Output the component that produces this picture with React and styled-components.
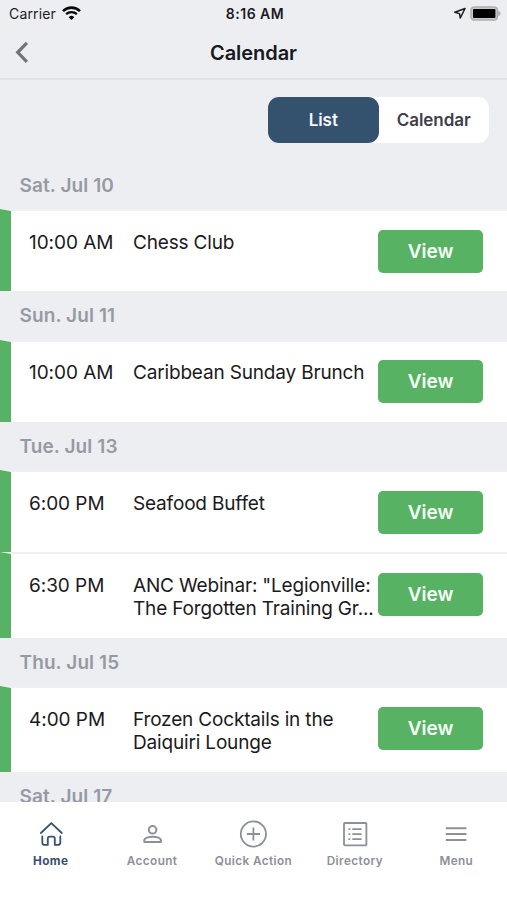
import React from 'react';
import styled, { createGlobalStyle } from 'styled-components';

const GlobalStyle = createGlobalStyle`
  * {
    box-sizing: border-box;
  }
  body {
    margin: 0;
    background: #edeef2;
    font-family: Inter, "Liberation Sans", sans-serif;
  }
  button {
    font-family: inherit;
    border: 0;
    padding: 0;
    cursor: pointer;
  }
`;

const Screen = styled.div`
  display: flex;
  flex-direction: column;
  width: 507px;
  height: 900px;
  overflow: hidden;
  background: #edeef2;
`;

const StatusBar = styled.div`
  display: grid;
  grid-template-columns: 1fr auto 1fr;
  align-items: center;
  height: 27px;
  padding: 0 6px 0 9px;
  color: #1c1c1f;
`;

const StatusGroup = styled.div`
  display: flex;
  align-items: center;
  justify-content: ${ props => props.$end ? 'flex-end' : 'flex-start' };
  gap: ${ props => props.$end ? '4px' : '6px' };
  font-size: 14px;
  letter-spacing: 0.15px;
`;

const Clock = styled.div`
  font-size: 14px;
  font-weight: 600;
  letter-spacing: 0.5px;
`;

const Header = styled.header`
  display: grid;
  grid-template-columns: 48px 1fr 48px;
  align-items: center;
  height: 53px;
  border-bottom: 2px solid #e0e1e4;
`;

const BackButton = styled.button`
  display: flex;
  padding-left: 14px;
  background: none;
`;

const Title = styled.h1`
  margin: 0;
  color: #18191c;
  font-size: 20px;
  font-weight: 600;
  line-height: 50px;
  letter-spacing: -0.05px;
  text-align: center;
`;

const Content = styled.main`
  flex: 1;
  min-height: 0;
  overflow: hidden;
`;

const ToggleBar = styled.div`
  display: flex;
  justify-content: flex-end;
  height: 80.5px;
  padding: 17px 18px 0 0;
`;

const Toggle = styled.div`
  display: flex;
  width: 221px;
  height: 46px;
  border-radius: 11px;
  background: #fff;
`;

const ToggleOption = styled.button`
  flex: 1;
  border-radius: 11px;
  background: ${ props => props.$active ? '#34516e' : 'transparent' };
  color: ${ props => props.$active ? '#f4f7fa' : '#3d404b' };
  font-size: 17px;
  font-weight: 600;
  letter-spacing: -0.05px;
`;

const DayHeading = styled.h2`
  height: 48.5px;
  margin: 0;
  padding-left: 19.5px;
  color: #969aa3;
  font-size: 19px;
  font-weight: 600;
  line-height: 49px;
  letter-spacing: 0.1px;
`;

const EventRow = styled.div`
  display: flex;
  align-items: flex-start;
  height: ${ props => props.$tall ? '85.5px' : '82px' };
  padding: 18.5px 24px 0 18px;
  border-top: 2px solid #f0f0f3;
  border-left: 11px solid #57b363;
  background: #fff;
`;

const EventTime = styled.div`
  width: 104px;
  padding-top: 1px;
  color: #1a1a1c;
  font-size: 19px;
  line-height: 23px;
  letter-spacing: -0.05px;
  white-space: nowrap;
`;

const EventName = styled.div`
  flex: 1;
  padding-top: 1px;
  color: #1a1a1c;
  font-size: 19px;
  line-height: 23px;
  letter-spacing: -0.17px;
  white-space: pre;
`;

const ViewButton = styled.button`
  flex: none;
  width: 105px;
  height: 43px;
  border-radius: 5px;
  background: #57b363;
  color: #f7fff8;
  font-size: 19px;
  font-weight: 600;
`;

const TabBar = styled.nav`
  display: grid;
  grid-template-columns: repeat(5, 1fr);
  height: 98px;
  padding-top: 17px;
  background: #fff;
`;

const Tab = styled.button`
  display: flex;
  flex-direction: column;
  align-items: center;
  background: none;
  color: ${ props => props.$active ? '#38516f' : '#8d9098' };
  font-size: 11.75px;
  font-weight: ${ props => props.$active ? 700 : 600 };
  line-height: 16px;
  letter-spacing: 0.4px;
  white-space: nowrap;
`;

const TabIcon = styled.svg`
  width: 30px;
  height: 30px;
  margin-bottom: 4px;
  fill: none;
  stroke: currentColor;
  stroke-width: 1.8;
`;

const WifiIcon = () => (
  <svg width="19" height="15" viewBox="0 0 19 15" fill="none" stroke="#09090b">
    <path d="M1 5.1a12.2 12.2 0 0 1 17 0" strokeWidth="2.6" />
    <path d="M4.1 8.2a7.8 7.8 0 0 1 10.8 0" strokeWidth="2.3" />
    <path d="M9.5 14 6.7 11.2a4 4 0 0 1 5.6 0z" fill="#09090b" stroke="none" />
  </svg>
);

const LocationIcon = () => (
  <svg width="13" height="13" viewBox="0 0 13 13" fill="none" stroke="#1c1c1f" strokeWidth="1.5" strokeLinejoin="round">
    <path d="M12 1.5 1.8 5.3 6.5 6.6 7.3 11z" />
  </svg>
);

const BatteryIcon = () => (
  <svg width="31" height="15" viewBox="0 0 31 15">
    <rect x="1" y="0.9" width="26.4" height="13.2" rx="3.4" fill="#c9cacc" stroke="#adaeb0" strokeWidth="1.5" />
    <rect x="3" y="3" width="22.4" height="9" rx="0.8" fill="#000" />
    <path d="M28.2 4.8c1.4.5 2.4 1.5 2.4 2.7s-1 2.2-2.4 2.7z" fill="#adaeb0" />
  </svg>
);

const BackIcon = () => (
  <svg width="15" height="23" viewBox="0 0 15 23" fill="none" stroke="#737477" strokeWidth="3.2">
    <path d="M12.9 1.8 3.7 11.3l9.2 9.5" />
  </svg>
);

const icons = {
  home: (
    <g strokeLinecap="round" strokeLinejoin="round">
      <path d="M4.9 14 15.3 4.2 25.8 14" />
      <path d="M6.3 17.4v6.3a2.2 2.2 0 0 0 2.2 2.2h3.3v-6.3a2 2 0 0 1 2-2h3a2 2 0 0 1 2 2v6.3h3.3a2.2 2.2 0 0 0 2.2-2.2v-6.3" />
    </g>
  ),
  account: (
    <g strokeWidth="2">
      <circle cx="15.6" cy="10.8" r="3.8" />
      <path d="M7.3 23.1v-1.7c0-2.5 4.4-3.7 8.3-3.7s8.3 1.2 8.3 3.7v1.7z" strokeLinejoin="round" />
    </g>
  ),
  plus: (
    <g>
      <circle cx="15.4" cy="15" r="12.6" />
      <path d="M8.8 15H22M15.4 8.6v12.8" />
    </g>
  ),
  directory: (
    <g>
      <rect x="4" y="4" width="22.4" height="22.4" rx="0.8" />
      <path d="M12.3 10.1h9.3M12.3 15.1h9.3M12.3 20.1h9.3" />
      <path d="M8.5 10.1h1.8M8.5 15.1h1.8M8.5 20.1h1.8" />
    </g>
  ),
  menu: <path d="M4.8 9.2h20.6M4.8 15.1h20.6M4.8 20.9h20.6" strokeWidth="2" />,
};

const days = [
  { date: 'Sat. Jul 10', events: [ { time: '10:00 AM', name: 'Chess Club' } ] },
  { date: 'Sun. Jul 11', events: [ { time: '10:00 AM', name: 'Caribbean Sunday Brunch' } ] },
  {
    date: 'Tue. Jul 13',
    events: [
      { time: '6:00 PM', name: 'Seafood Buffet' },
      { time: '6:30 PM', name: 'ANC Webinar: "Legionville:\nThe Forgotten Training Gr...', tall: true },
    ],
  },
  {
    date: 'Thu. Jul 15',
    events: [ { time: '4:00 PM', name: 'Frozen Cocktails in the\nDaiquiri Lounge', tall: true } ],
  },
  { date: 'Sat. Jul 17', events: [] },
];

const tabs = [
  { label: 'Home', icon: 'home' },
  { label: 'Account', icon: 'account' },
  { label: 'Quick Action', icon: 'plus' },
  { label: 'Directory', icon: 'directory' },
  { label: 'Menu', icon: 'menu' },
];

class App extends React.Component {
  constructor ( props ) {
    super( props );
    this.state = { view: 'List', tab: 'Home' };
  }

  render () {
    const { view, tab } = this.state;
    return (
      <Screen>
        <GlobalStyle />
        <StatusBar>
          <StatusGroup>Carrier<WifiIcon /></StatusGroup>
          <Clock>8:16 AM</Clock>
          <StatusGroup $end><LocationIcon /><BatteryIcon /></StatusGroup>
        </StatusBar>
        <Header>
          <BackButton aria-label="Back"><BackIcon /></BackButton>
          <Title>Calendar</Title>
        </Header>
        <Content>
          <ToggleBar>
            <Toggle>
              {[ 'List', 'Calendar' ].map( option => (
                <ToggleOption key={ option } $active={ view === option }
                  onClick={ () => this.setState( { view: option } ) }>
                  {option}
                </ToggleOption>
              ) )}
            </Toggle>
          </ToggleBar>
          {days.map( day => (
            <section key={ day.date }>
              <DayHeading>{day.date}</DayHeading>
              {day.events.map( event => (
                <EventRow key={ event.time } $tall={ event.tall }>
                  <EventTime>{event.time}</EventTime>
                  <EventName>{event.name}</EventName>
                  <ViewButton>View</ViewButton>
                </EventRow>
              ) )}
            </section>
          ) )}
        </Content>
        <TabBar>
          {tabs.map( item => (
            <Tab key={ item.label } $active={ tab === item.label }
              onClick={ () => this.setState( { tab: item.label } ) }>
              <TabIcon viewBox="0 0 30 30">{icons[ item.icon ]}</TabIcon>
              {item.label}
            </Tab>
          ) )}
        </TabBar>
      </Screen>
    );
  }
}

export default App;
